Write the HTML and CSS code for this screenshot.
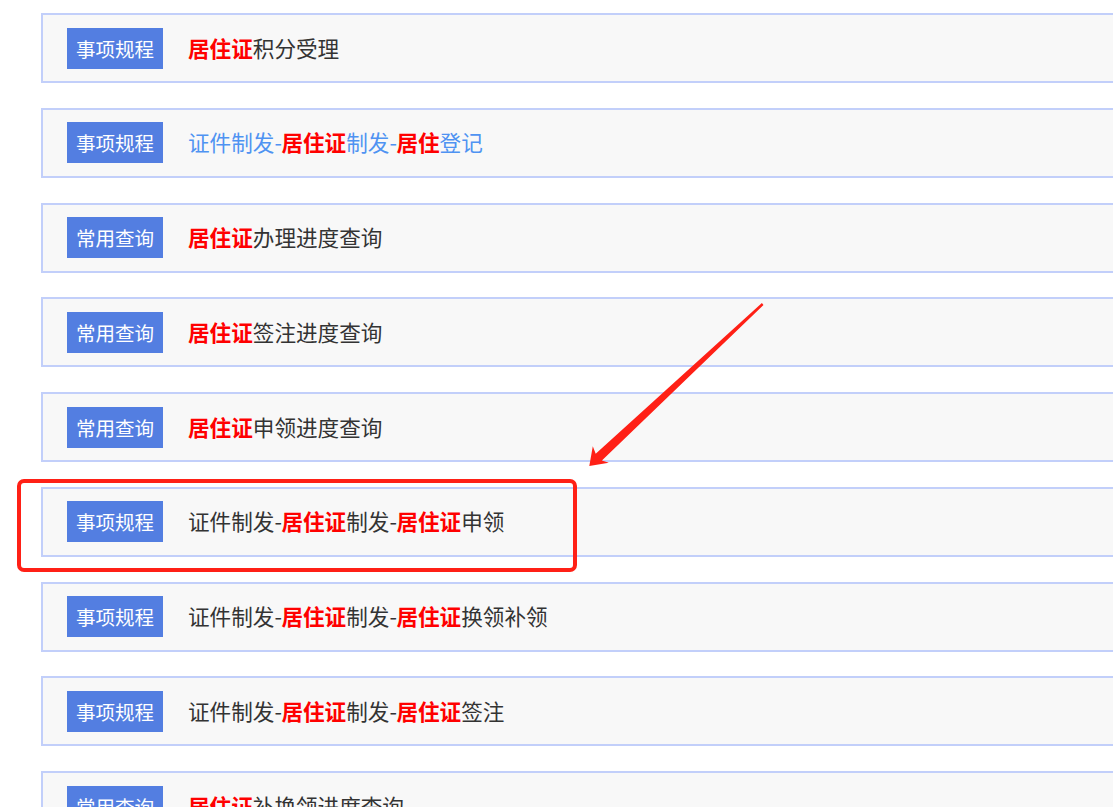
FILE: index.html
```html
<!DOCTYPE html>
<html lang="zh-CN">
<head>
<meta charset="utf-8">
<title>搜索结果</title>
<link rel="stylesheet" href="styles.css">
</head>
<body>
<div class="list">
  <div class="card"><span class="badge">事项规程</span><span class="title"><b>居住证</b>积分受理</span></div>
  <div class="card"><span class="badge">事项规程</span><span class="title link">证件制发<span class="sep">-</span><b>居住证</b>制发<span class="sep">-</span><b>居住</b>登记</span></div>
  <div class="card"><span class="badge">常用查询</span><span class="title"><b>居住证</b>办理进度查询</span></div>
  <div class="card"><span class="badge">常用查询</span><span class="title"><b>居住证</b>签注进度查询</span></div>
  <div class="card"><span class="badge">常用查询</span><span class="title"><b>居住证</b>申领进度查询</span></div>
  <div class="card"><span class="badge">事项规程</span><span class="title">证件制发<span class="sep">-</span><b>居住证</b>制发<span class="sep">-</span><b>居住证</b>申领</span></div>
  <div class="card"><span class="badge">事项规程</span><span class="title">证件制发<span class="sep">-</span><b>居住证</b>制发<span class="sep">-</span><b>居住证</b>换领补领</span></div>
  <div class="card"><span class="badge">事项规程</span><span class="title">证件制发<span class="sep">-</span><b>居住证</b>制发<span class="sep">-</span><b>居住证</b>签注</span></div>
  <div class="card"><span class="badge">常用查询</span><span class="title"><b>居住证</b>补换领进度查询</span></div>
</div>
<svg class="marks" width="1113" height="807" viewBox="0 0 1113 807">
  <rect x="19" y="481" width="556" height="89" rx="5" ry="5" fill="none" stroke="#ff2016" stroke-width="4"/>
  <polygon fill="#ff2016" points="589.3,466 608.8,462.8 601.9,460.4 763.5,304.9 761.9,303.1 595.7,453.8 592.8,446.2"/>
</svg>
</body>
</html>
```
FILE: styles.css
```css
html, body {
  margin: 0;
  padding: 0;
  overflow: hidden;
  background: #ffffff;
  width: 1113px;
  height: 807px;
}
body {
  position: relative;
  font-family: "Noto Sans CJK SC", "Microsoft YaHei", sans-serif;
}
.list {
  display: flex;
  flex-direction: column;
  gap: 24.75px;
  padding: 13px 0 0 41px;
}
.card {
  box-sizing: border-box;
  width: 1100px;
  height: 70px;
  border: 2px solid #c2cffa;
  background: #f8f8f8;
  display: flex;
  align-items: center;
  padding-left: 24px;
  flex-shrink: 0;
}
.badge {
  width: 96px;
  height: 41px;
  background: #537ee1;
  color: #ffffff;
  font-size: 19.5px;
  display: flex;
  align-items: center;
  justify-content: center;
  margin-right: 25px;
  flex-shrink: 0;
}
.title {
  font-size: 21.6px;
  color: #333333;
  white-space: nowrap;
  position: relative;
  top: -1px;
}
.title .sep {
  letter-spacing: -0.5px;
}
.title b {
  color: #ff0000;
  font-weight: bold;
}
.title.link {
  color: #4f93f2;
}
.marks {
  position: absolute;
  left: 0;
  top: 0;
  pointer-events: none;
}
```
